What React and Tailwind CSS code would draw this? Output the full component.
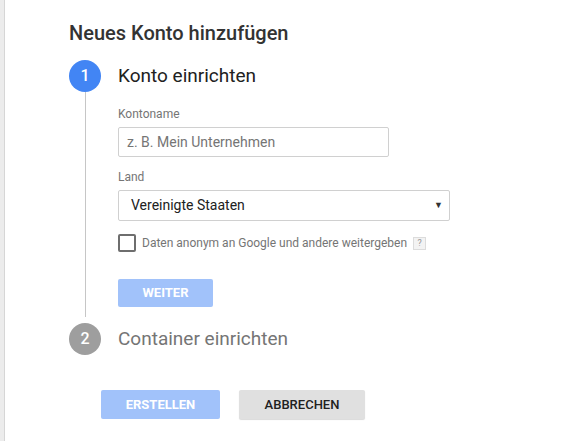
import React from 'react';

export default function App() {
  return (
    <div className="flex h-[441px] w-[573px] bg-white font-['Roboto',sans-serif] overflow-hidden">
      <div className="w-[5px] shrink-0 bg-[#ececec] border-r border-[#d6d6d6]"></div>
      <div className="pl-[64px] pt-[21px] flex-1">
        <h1 className="text-[20px] leading-[24px] font-medium text-[#333]">Neues Konto hinzufügen</h1>

        <div className="mt-[15px] flex gap-[17px]">
          <div className="w-[32px] flex flex-col items-center">
            <div className="w-[32px] h-[32px] rounded-full bg-[#4285f4] text-white text-[16px] font-medium flex items-center justify-center">1</div>
            <div className="flex-1 w-px bg-[#c6c6c6] mb-[6px]"></div>
          </div>
          <div className="flex flex-col">
            <div className="text-[19px] leading-[32px] text-[#212121]">Konto einrichten</div>
            <label className="mt-[14px] text-[12px] leading-[16px] text-[#757575]">Kontoname</label>
            <div className="mt-[5px] w-[271px] h-[30px] border border-[#d0d0d0] rounded-[2px] px-[8px] flex items-center text-[14px] text-[#757575]">z. B. Mein Unternehmen</div>
            <label className="mt-[12px] text-[12px] leading-[16px] text-[#757575]">Land</label>
            <div className="mt-[5px] w-[332px] h-[31px] border border-[#d0d0d0] rounded-[2px] pl-[12px] pr-[6px] flex items-center justify-between text-[14px] text-[#212121]">
              <span>Vereinigte Staaten</span>
              <span className="text-[9px] text-[#333]">▼</span>
            </div>
            <div className="mt-[13px] flex items-center">
              <div className="w-[18px] h-[18px] border-2 border-[#6e6e6e] rounded-[2px]"></div>
              <span className="ml-[6px] text-[12px] text-[#757575]">Daten anonym an Google und andere weitergeben</span>
              <span className="ml-[6px] w-[13px] h-[13px] border border-[#dcdcdc] bg-[#f3f3f3] text-[9px] leading-[11px] text-[#999] flex items-center justify-center">?</span>
            </div>
            <div className="mt-[27px] mb-[16px] w-[95px] h-[28px] rounded-[2px] bg-[#a1c2fa] text-white text-[13px] font-bold flex items-center justify-center">WEITER</div>
          </div>
        </div>

        <div className="flex gap-[17px] items-center">
          <div className="w-[32px] h-[32px] rounded-full bg-[#9e9e9e] text-white text-[16px] font-medium flex items-center justify-center">2</div>
          <div className="text-[19px] leading-[32px] text-[#757575]">Container einrichten</div>
        </div>

        <div className="mt-[35px] ml-[32px] flex gap-[19px]">
          <div className="w-[119px] h-[29px] rounded-[2px] bg-[#a1c2fa] text-white text-[13px] font-bold flex items-center justify-center">ERSTELLEN</div>
          <div className="w-[126px] h-[29px] rounded-[2px] bg-[#e0e0e0] shadow-[0_1px_1px_rgba(0,0,0,0.15)] text-[#212121] text-[13px] font-medium flex items-center justify-center">ABBRECHEN</div>
        </div>
      </div>
    </div>
  );
}
